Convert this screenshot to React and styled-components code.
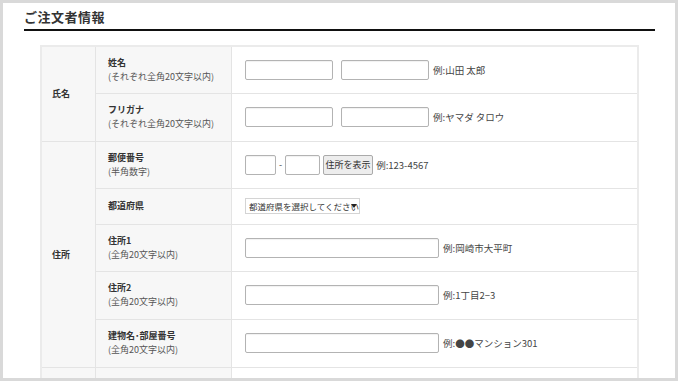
import React from 'react';
import styled, { createGlobalStyle } from 'styled-components';

const GlobalStyle = createGlobalStyle`
  html, body {
    margin: 0;
    padding: 0;
    background: #fff;
  }
  body {
    font-family: "Noto Sans CJK JP", "Noto Sans", sans-serif;
    color: #333;
  }
`

const Frame = styled.div`
  width: 678px;
  height: 381px;
  box-sizing: border-box;
  border: 3px solid #d9d9d9;
  background: #fff;
  overflow: hidden;
  padding: 0 20px 0 21px;
`

const Heading = styled.h2`
  margin: 0;
  padding: 4px 0 3px 0;
  font-size: 13px;
  line-height: 19px;
  font-weight: bold;
  letter-spacing: 0.5px;
  color: #333;
  border-bottom: 2px solid #111;
`

const TableWrap = styled.div`
  margin: 14px 16px 0 16px;
`

const Table = styled.table`
  width: 100%;
  border-collapse: collapse;
  border: 2px solid #ebebeb;
  table-layout: fixed;
`

const Row = styled.tr`
  height: ${p => p.$h || 47}px;
`

const GroupCell = styled.th`
  width: 43px;
  padding: 0 0 0 10px;
  background: #f7f7f7;
  border: 1px solid #e4e4e4;
  text-align: left;
  font-size: 9px;
  font-weight: bold;
  color: #333;
`

const LabelCell = styled.td`
  width: 123px;
  padding: 0 0 0 12px;
  background: #f7f7f7;
  border: 1px solid #e4e4e4;
  vertical-align: middle;
`

const Label = styled.div`
  font-size: 9px;
  font-weight: bold;
  line-height: 14px;
  color: #333;
`

const Note = styled.div`
  font-size: 9px;
  line-height: 14px;
  color: #555;
`

const FieldCell = styled.td`
  padding: 0 0 0 13px;
  border: 1px solid #e4e4e4;
  background: #fff;
`

const Fields = styled.div`
  display: flex;
  align-items: center;
  gap: ${p => p.$gap || 4}px;
`

const Input = styled.input`
  box-sizing: border-box;
  width: ${p => p.$w}px;
  height: 20px;
  margin: 0;
  padding: 0 4px;
  border: 1px solid #b3b3b3;
  border-radius: 2px;
  background: #fff;
  box-shadow: inset 0 1px 1px rgba(0, 0, 0, 0.06);
`

const Example = styled.span`
  font-size: 9.5px;
  color: #444;
  white-space: nowrap;
`

const Dash = styled.span`
  font-size: 9px;
  color: #444;
`

const Button = styled.button`
  box-sizing: border-box;
  height: 20px;
  width: 50px;
  padding: 0;
  margin: 0;
  border: 1px solid #aaa;
  border-radius: 2px;
  background: #ededed;
  font-family: inherit;
  font-size: 9px;
  color: #333;
  white-space: nowrap;
`

const SelectWrap = styled.div`
  position: relative;
  display: flex;
  width: 115px;
  height: 16px;
`

const Select = styled.select`
  appearance: none;
  display: block;
  box-sizing: border-box;
  width: 115px;
  height: 16px;
  margin: 0;
  padding: 0 0 0 3px;
  border: 1px solid #d4d4d4;
  border-radius: 0;
  background: #fff;
  font-family: inherit;
  font-size: 8.5px;
  color: #333;
`

const Arrow = styled.span`
  position: absolute;
  right: 3px;
  top: 6px;
  width: 0;
  height: 0;
  border-left: 3px solid transparent;
  border-right: 3px solid transparent;
  border-top: 4px solid #222;
  pointer-events: none;
`

const Wrapped = ({ label, note }) => (
  <LabelCell>
    <Label>{label}</Label>
    {note && <Note>{note}</Note>}
  </LabelCell>
)

export default function App() {
  return (
    <>
      <GlobalStyle />
      <Frame>
        <Heading>ご注文者情報</Heading>
        <TableWrap>
          <Table>
            <tbody>
              <Row>
                <GroupCell rowSpan={2}>氏名</GroupCell>
                <Wrapped label="姓名" note="(それぞれ全角20文字以内)" />
                <FieldCell>
                  <Fields>
                    <Input $w={88} />
                    <Input $w={88} style={{ marginLeft: 4 }} />
                    <Example>例:山田 太郎</Example>
                  </Fields>
                </FieldCell>
              </Row>
              <Row $h={48}>
                <Wrapped label="フリガナ" note="(それぞれ全角20文字以内)" />
                <FieldCell>
                  <Fields>
                    <Input $w={88} />
                    <Input $w={88} style={{ marginLeft: 4 }} />
                    <Example>例:ヤマダ タロウ</Example>
                  </Fields>
                </FieldCell>
              </Row>
              <Row>
                <GroupCell rowSpan={5}>住所</GroupCell>
                <Wrapped label="郵便番号" note="(半角数字)" />
                <FieldCell>
                  <Fields $gap={3}>
                    <Input $w={31} />
                    <Dash>-</Dash>
                    <Input $w={35} />
                    <Button>住所を表示</Button>
                    <Example>例:123-4567</Example>
                  </Fields>
                </FieldCell>
              </Row>
              <Row $h={36}>
                <Wrapped label="都道府県" />
                <FieldCell>
                  <SelectWrap>
                    <Select defaultValue="">
                      <option value="">都道府県を選択してください</option>
                    </Select>
                    <Arrow />
                  </SelectWrap>
                </FieldCell>
              </Row>
              <Row>
                <Wrapped label="住所1" note="(全角20文字以内)" />
                <FieldCell>
                  <Fields>
                    <Input $w={194} />
                    <Example>例:岡崎市大平町</Example>
                  </Fields>
                </FieldCell>
              </Row>
              <Row $h={48}>
                <Wrapped label="住所2" note="(全角20文字以内)" />
                <FieldCell>
                  <Fields>
                    <Input $w={194} />
                    <Example>例:1丁目2−3</Example>
                  </Fields>
                </FieldCell>
              </Row>
              <Row $h={48}>
                <Wrapped label="建物名･部屋番号" note="(全角20文字以内)" />
                <FieldCell>
                  <Fields>
                    <Input $w={194} />
                    <Example>例:●●マンション301</Example>
                  </Fields>
                </FieldCell>
              </Row>
              <Row>
                <GroupCell>&nbsp;</GroupCell>
                <Wrapped label="&nbsp;" />
                <FieldCell>
                  <Fields>
                    <Input $w={194} />
                  </Fields>
                </FieldCell>
              </Row>
            </tbody>
          </Table>
        </TableWrap>
      </Frame>
    </>
  );
}
